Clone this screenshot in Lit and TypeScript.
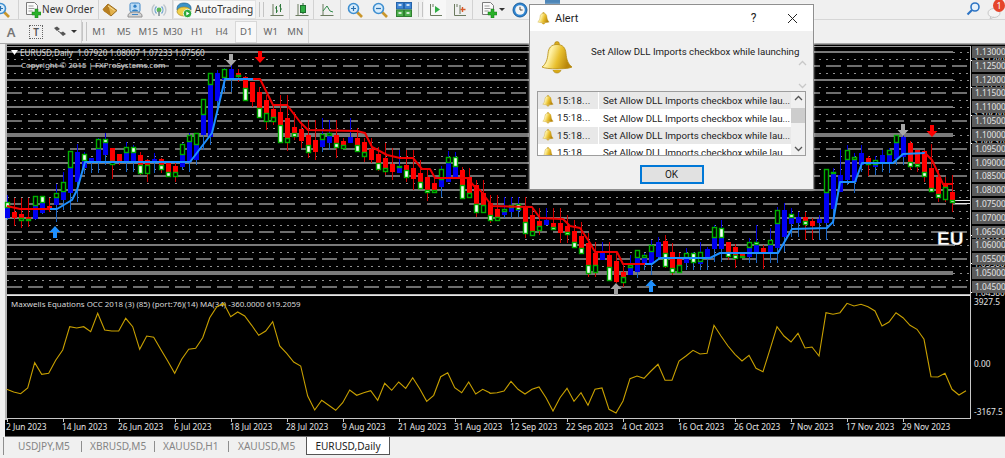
import { LitElement, html, css, svg } from "lit";
import { customElement } from "lit/decorators.js";

type C = [number, number, number, number, "R" | "B", number?, string?];
const CANDLES: C[] = [
[195,202,218,220,"B",208,"w"],[198,212,218,226,"R"],[198,214,221,228,"R",218,"g"],[198,217,221,227,"R",219,"g"],
[196,196,219,220,"B",206,"g"],[196,196,213,214,"B",203,"w"],[198,206,210,212,"R"],[184,193,205,222,"B",198,"g"],
[172,182,200,210,"B",192,"g"],[151,151,193,210,"B",168,"g"],[144,152,182,202,"B"],[152,154,168,174,"B",161,"w"],
[158,158,163,173,"B"],[138,139,162,173,"B",149,"g"],[133,139,155,165,"B",143,"w"],[148,148,165,179,"R",161,"g"],
[154,154,163,165,"R"],[142,147,162,172,"B",153,"g"],[145,147,162,172,"B",153,"w"],[152,155,174,175,"R",165,"w"],
[159,160,174,182,"R",165,"g"],[153,159,163,173,"B"],[158,159,170,173,"R",165,"w"],[162,163,177,177,"R",172,"w"],
[163,166,177,182,"R",172,"g"],[143,144,167,170,"B",155,"g"],[133,135,162,172,"B",142,"g"],[133,133,160,165,"B",145,"g"],
[99,99,135,150,"B",115,"g"],[73,73,137,145,"B",85,"g"],[70,73,101,110,"B"],[68,69,80,92,"B",78,"g"],
[62,69,78,92,"B"],[69,73,77,82,"R",75,"w"],[76,77,101,101,"R",88,"w"],[82,82,102,107,"R"],
[87,92,118,118,"R",108,"w"],[95,100,122,130,"R",113,"g"],[105,109,122,125,"R",117,"g"],[95,112,143,143,"R",125,"w"],
[95,118,143,151,"R",138,"g"],[112,127,137,140,"R",133,"w"],[122,129,141,148,"R"],[120,135,153,158,"R",145,"w"],
[120,140,152,160,"R"],[118,134,147,152,"B",140,"g"],[120,133,143,150,"B",136,"g"],[120,135,148,158,"R",143,"w"],
[138,141,149,149,"R",145,"g"],[118,137,143,143,"B"],[128,138,152,152,"R",145,"w"],[138,142,157,162,"R",152,"g"],
[138,149,160,163,"R"],[147,154,170,171,"R",163,"w"],[143,158,172,175,"R",168,"g"],[148,164,172,180,"R"],
[150,166,173,173,"B",168,"g"],[150,165,178,182,"R",170,"w"],[150,168,179,190,"R"],[160,173,189,189,"R",182,"w"],
[168,177,193,201,"R",190,"w"],[177,183,193,193,"R",190,"g"],[166,169,187,197,"B",180,"g"],[151,157,182,182,"B",163,"g"],
[152,157,179,179,"B",167,"w"],[167,170,199,199,"R",185,"w"],[168,177,198,198,"R",193,"g"],[180,185,213,217,"R",204,"w"],
[180,193,213,213,"R",205,"g"],[195,203,221,223,"R",215,"w"],[195,209,221,221,"R",217,"g"],[197,209,215,218,"B",212,"g"],
[197,205,212,218,"B",208,"g"],[197,204,211,217,"B",210,"w"],[197,207,234,238,"R",222,"w"],[208,215,236,236,"R",231,"g"],
[208,221,231,235,"R",226,"g"],[208,220,225,225,"B"],[208,223,230,230,"R",227,"w"],[208,223,233,243,"R"],
[215,226,235,243,"R",232,"w"],[220,231,248,248,"R",242,"w"],[222,236,254,254,"R",248,"w"],[233,243,274,277,"R",265,"w"],
[242,253,273,277,"R",265,"g"],[242,253,260,260,"B"],[242,255,281,281,"R",267,"w"],[252,261,282,283,"R"],
[263,272,283,287,"R",277,"g"],[255,265,275,275,"B",268,"g"],[250,250,272,278,"B",258,"g"],[253,255,263,270,"B",258,"g"],
[240,245,263,275,"B",252,"g"],[237,242,257,260,"B"],[235,241,267,268,"R",253,"w"],[243,252,273,275,"R",268,"w"],
[253,259,273,273,"R",265,"g"],[248,253,263,270,"B",258,"g"],[252,253,263,270,"B",263,"w"],[242,252,264,270,"B",262,"g"],
[247,249,258,270,"B"],[225,227,249,262,"B",238,"g"],[220,228,249,262,"B",238,"w"],[242,242,257,260,"R",252,"w"],
[244,247,259,268,"R",255,"w"],[252,252,258,258,"R",256,"g"],[238,242,257,263,"B",248,"g"],[225,242,253,263,"B",245,"w"],
[245,248,253,269,"R"],[228,240,253,263,"B",245,"g"],[207,210,248,263,"B",224,"g"],[203,210,237,252,"B"],
[208,214,224,237,"B",218,"w"],[212,217,223,237,"B"],[212,217,225,240,"R",221,"w"],[218,221,226,240,"R"],
[215,219,223,240,"B"],[169,169,223,240,"B",193,"g"],[168,172,209,226,"B",174,"w"],[150,175,192,192,"B"],
[145,150,180,185,"B",160,"g"],[153,157,182,193,"B",160,"g"],[145,153,165,172,"B"],[156,158,165,176,"R",163,"w"],
[156,160,167,175,"B",165,"g"],[150,155,163,172,"B"],[148,150,163,173,"B",155,"g"],[135,135,159,165,"B",143,"g"],
[134,137,157,165,"B"],[141,143,167,170,"R",162,"w"],[150,150,167,172,"R",164,"w"],[150,151,177,182,"R",172,"w"],
[144,168,192,192,"R",188,"w"],[170,177,198,202,"R",194,"w"],[177,185,200,202,"R",187,"g"],[175,192,203,212,"R",200,"w"],
];

const BLUE_MA = [
"50,209 57,209 72,200 77,190 85,162 190,162 212,133 225,79 253,79",
"645,264 652,264 660,258 710,258 720,253 778,253 792,229 827,228 833,222 840,182 855,182 862,163 893,163 903,154 925,153",
];
const RED_MA = [
"7,206 20,209 50,209",
"253,79 260,79 273,105 287,105 300,122 308,130 357,131 365,133 372,147 387,155 400,158 413,158 422,169 430,169 435,178 467,178 475,187 480,190 492,206 532,207 540,218 563,219 570,226 580,228 590,243 595,252 617,252 623,264 645,264",
"925,153 932,160 943,184 953,184",
];

const OSC_L = [280,288,293,276,200,235,232,193,162,92,96,92,107,52,102,105,105,67,92,160,120,124,160,195,232,190,160,157,125,65,33,22,62,48,60,88,118,105,77,150,172,198,210,300,342,313,328,343,320,282,298,290,284,313,262,283,258,277,245,278,316,298,242,230,275,290,258,294,280,290];
const OSC_R = [292,290,285,256,280,294,280,273,305,345,305,277,316,290,328,280,276,340,351,315,248,240,247,225,205,253,253,195,180,163,174,172,88,120,150,175,195,178,217,227,160,92,120,138,112,156,153,180,50,55,50,22,30,25,32,45,90,78,50,65,88,100,130,242,243,232,280,297,284];
const oscPoints = [
  ...OSC_L.map((v, i) => `${(6.67 + i * 7).toFixed(1)},${(296 + v / 3).toFixed(1)}`),
  ...OSC_R.map((v, i) => `${(490 + i * 7).toFixed(1)},${(296 + v / 3).toFixed(1)}`),
].join(" ");

const DATES = ["2 Jun 2023","14 Jun 2023","26 Jun 2023","6 Jul 2023","18 Jul 2023","28 Jul 2023","9 Aug 2023","21 Aug 2023","31 Aug 2023","12 Sep 2023","22 Sep 2023","4 Oct 2023","16 Oct 2023","26 Oct 2023","7 Nov 2023","17 Nov 2023","29 Nov 2023"];
const lvl = (k: number) => Math.round(52 + k * 6.91);
const LEVELS = Array.from({ length: 36 }, (_, k) => k);
const PRICES = Array.from({ length: 18 }, (_, i) => (1.13 - i * 0.005).toFixed(5));
const HIDDEN: [number, string][] = [[61,"1.12780"],[88,"1.11650"],[116,"1.10600"],[144,"1.09610"],[236,"1.06190"],[264,"1.05380"],[293,"1.04380"]];

const candle = (c: C, i: number) => {
  const x = 7 + i * 7;
  const [h, t, b, l, ty, s, m] = c;
  const cx = x + 0.5;
  const main = ty === "R" ? "#ff0000" : "#0000f0";
  const wick = ty === "R" ? "#d00000" : "#1a66c8";
  const split = s ?? 0;
  let extra = svg``;
  if (split) {
    const a = ty === "R" ? split : t;
    const z = ty === "R" ? b : split;
    extra = svg`<rect x=${x - 1.5} y=${a + 0.5} width="4" height=${Math.max(z - a - 1, 1)} fill=${m === "w" ? "#f4fff4" : "#000"} stroke="#00b000" stroke-width="1.4" shape-rendering="auto"></rect>`;
  }
  return svg`<line x1=${cx} x2=${cx} y1=${h} y2=${l} stroke=${wick}></line>
    ${ty === "B" ? svg`<line x1=${cx} x2=${cx} y1=${h} y2=${t} stroke="#0000e0"></line>` : ""}
    <rect x=${x - 2} y=${t} width="5" height=${b - t} fill=${main}></rect>${extra}`;
};

const arrow = (x: number, y: number, up: boolean, col: string) => {
  const d = up
    ? `M0 -6 L5.5 0 L2 0 L2 6 L-2 6 L-2 0 L-5.5 0 Z`
    : `M0 6 L5.5 0 L2 0 L2 -6 L-2 -6 L-2 0 L-5.5 0 Z`;
  return svg`<path d=${d} fill=${col} transform="translate(${x} ${y})"></path>`;
};

const ic = (w: number, h: number, body: unknown) =>
  html`<svg width=${w} height=${h} viewBox="0 0 ${w} ${h}">${body}</svg>`;

const mag = (sign: string) => ic(16, 16, svg`
  <line x1="10" y1="10" x2="15" y2="15" stroke="#c9962b" stroke-width="2.6"></line>
  <circle cx="6.5" cy="6.5" r="5" fill="#d7ecfb" stroke="#3f8fd0" stroke-width="1.6"></circle>
  ${sign === "+" ? svg`<path d="M4 6.5h5M6.5 4v5" stroke="#2a70b0" stroke-width="1.2"></path>` : svg`<path d="M4 6.5h5" stroke="#2a70b0" stroke-width="1.2"></path>`}`);
const plus = svg`<path d="M10 7h3v3h3v3h-3v3h-3v-3H7v-3h3z" fill="#28b028" stroke="#157a15" stroke-width=".5"></path>`;
const docPlus = ic(16, 16, svg`
  <path d="M1.5 .5h8l3 3v9h-11z" fill="#fafafa" stroke="#7b7b7b"></path>
  <path d="M3.5 4h5M3.5 6.5h6M3.5 9h4" stroke="#9a9a9a"></path>${plus}`);
const book = ic(16, 14, svg`
  <path d="M6 1 L15 7.5 L9 13 L1 6.5 Z" fill="#e2b04a" stroke="#96681c"></path>
  <path d="M6 1 L1 6.5 L2 8.5 L9 13" fill="#b77f22"></path>
  <path d="M6 3 L12.5 7.5" stroke="#f7dd96"></path>`);
const person = ic(16, 16, svg`
  <rect x="3" y="1" width="10" height="9" rx="1.5" fill="#bcdcf5" stroke="#3f86c6"></rect>
  <circle cx="8" cy="4.2" r="1.6" fill="#2f7fc4"></circle>
  <path d="M5 9c0-2 6-2 6 0" fill="#2f7fc4"></path>
  <path d="M1 14c0-3 3-4 7-4s7 1 7 4v1H1z" fill="#d3d3d3" stroke="#8f8f8f"></path>
  <path d="M5 12.5h6" stroke="#3f86c6"></path>`);
const signal = ic(16, 16, svg`
  <path d="M3.5 2.5a7.5 7.5 0 0 0 0 11" fill="none" stroke="#bfc7cc" stroke-width="1.4"></path>
  <path d="M12.5 2.5a7.5 7.5 0 0 1 0 11" fill="none" stroke="#bfc7cc" stroke-width="1.4"></path>
  <path d="M5.5 4.5a5 5 0 0 0 0 7" fill="none" stroke="#6ea5cf" stroke-width="1.3"></path>
  <path d="M10.5 4.5a5 5 0 0 1 0 7" fill="none" stroke="#6ea5cf" stroke-width="1.3"></path>
  <circle cx="8" cy="8" r="2.4" fill="#58b858"></circle><path d="M8 9v5" stroke="#7a8a90" stroke-width="1.5"></path>`);
const auto = ic(16, 16, svg`
  <path d="M1 7 C1 2 5 1 8 1 C12 1 15 3 15 6 L15 8 L1 8Z" fill="#3b93c9" stroke="#22628c" stroke-width=".7"></path>
  <ellipse cx="8" cy="9.5" rx="7" ry="4.5" fill="#f0d049" stroke="#a98a1e" stroke-width=".7"></ellipse>
  <circle cx="11.5" cy="11.5" r="4.2" fill="#2caa3c" stroke="#fff" stroke-width=".8"></circle>
  <path d="M10.3 9.5l3.2 2-3.2 2z" fill="#fff"></path>`);
const axes = `M1.5 1v11.5H14M4 1v3`;
const bars = ic(14, 14, svg`
  <path d="M.5 12.5h13M3 1v12" stroke="#6b7a5f" fill="none"></path>
  <path d="M6.5 3v7M5 5h1.5M6.5 8H8M10.5 1v8M9 3h1.5M10.5 6H12" stroke="#2f7a3c" fill="none"></path>`);
const candlesIc = ic(14, 14, svg`
  <path d="M.5 12.5h13M3 1v12" stroke="#6b7a5f" fill="none"></path>
  <path d="M8 0v11" stroke="#1f6e2e"></path><rect x="5.5" y="2.5" width="5" height="7" fill="#2fae44" stroke="#1f6e2e"></rect>`);
const lineIc = ic(14, 14, svg`
  <path d="M.5 12.5h13M3 1v12" stroke="#6b7a5f" fill="none"></path>
  <path d="M3 8l4-5 3 5 3 1" stroke="#2f8a4a" fill="none"></path>`);
const tiles = ic(16, 15, svg`
  <rect x=".5" y=".5" width="7" height="6.5" fill="#3f86d6" stroke="#2663a8"></rect>
  <rect x="8.5" y=".5" width="7" height="6.5" fill="#3f86d6" stroke="#2663a8"></rect>
  <rect x=".5" y="8" width="7" height="6.5" fill="#4cae4c" stroke="#2f7f2f"></rect>
  <rect x="8.5" y="8" width="7" height="6.5" fill="#4cae4c" stroke="#2f7f2f"></rect>
  <path d="M2.5 3h3M10.5 3h3M2.5 11h3M10.5 11h3" stroke="#fff" stroke-width="1.5"></path>`);
const playIc = ic(13, 14, svg`
  <path d=${axes} stroke="#6b7a5f" fill="none"></path><path d="M6 3l5 3.5-5 3.5z" fill="#2fae44"></path>`);
const shiftIc = ic(13, 14, svg`
  <path d=${axes} stroke="#6b7a5f" fill="none"></path><path d="M7 2v9" stroke="#6b7a5f"></path>
  <path d="M9.5 4v5M7.5 6.5h5" stroke="#d85a2a" stroke-width="1.4"></path>`);
const clock = ic(16, 16, svg`
  <circle cx="8" cy="8" r="7" fill="#2f86d2" stroke="#1d5f9e"></circle>
  <circle cx="8" cy="8" r="4.8" fill="#f5f5f5"></circle>
  <path d="M8 4.8V8h2.6" fill="none" stroke="#444"></path>`);
const grip = html`<span class="grip"></span>`;
const sep = html`<span class="sep"></span>`;
const caret = html`<span class="caret"></span>`;

const bell = (w: number, id: string) => html`<svg width=${w} height=${w} viewBox="0 0 34 34" class="bell">
  ${svg`<defs><linearGradient id=${id} x1="0" x2="1" y1="0" y2=".3">
    <stop offset="0" stop-color="#f3d75a"></stop><stop offset=".35" stop-color="#fff2a6"></stop>
    <stop offset=".65" stop-color="#e9c02e"></stop><stop offset="1" stop-color="#b8860b"></stop></linearGradient></defs>
  <circle cx="17" cy="3" r="2.4" fill="#d9ab1c" stroke="#a57c0c" stroke-width=".6"></circle>
  <path d="M17 3.5c-6 0-8.5 3.5-9 9-.5 6-2 10.5-6 13.5 4 2.5 26 2.5 30 0-4-3-5.500-7.500-6-13.500-.5-5.500-3-9-9-9z" fill="url(#${id})" stroke="#b48a10" stroke-width=".8"></path>
  <path d="M13 29c1 4 7 4 8 0" fill="#d8aa18" stroke="#a57c0c" stroke-width=".6"></path>`}</svg>`;

const ROW1: [number, unknown, string?][] = [
  [10, html`<span class="cutmag">${mag("+")}</span>`], [8, ""], [1, sep], [6, ""], [16, docPlus],
  [57, html`<span class="tt neworder">New Order</span>`], [1, sep], [21, book], [29, person], [19, signal], [4, ""], [1, sep],
  [83, html`${auto}<span class="tt autot">AutoTrading</span>`, "pressed"], [3, ""], [5, grip], [25, bars], [1, sep], [23, candlesIc], [1, sep], [26, lineIc], [1, sep],
  [27, mag("+")], [23, mag("-")], [25, tiles], [8, grip], [22, playIc, "hot"], [26, shiftIc], [1, sep], [6, ""], [19, docPlus], [7, caret], [30, clock], [10, ""],
  [15, html`<span class="peek"></span>`, "top"],
];
const PERIODS = ["M1","M5","M15","M30","H1","H4","D1","W1","MN"];
const TABS = ["USDJPY,M5","XBRUSD,M5","XAUUSD,H1","XAUUSD,M5"];
const ROWS = [0, 1, 2, 3];

@customElement("app-root")
export class AppRoot extends LitElement {
  static styles = css`
    :host { display: block; width: 1005px; height: 458px; position: relative; overflow: hidden; background: #f0f0f0;
      font-family: "Noto Sans", "Liberation Sans", sans-serif; color: #303030; }
    .row1 { height: 19px; display: flex; border-bottom: 1px solid #d6d6d6; }
    .row2 { height: 23px; display: flex; border-bottom: 1px solid #a9a9a9; }
    .cell { display: flex; align-items: center; justify-content: center; flex: none; height: 100%; }
    .cell.pressed { background: #f8f8f8; box-shadow: inset 0 0 0 1px #e2e2e2; gap: 3px; }
    .cell.hot { background: #f7f7f7; }
    .cell.top { align-items: flex-start; }
    .peek { display: block; width: 15px; height: 4px; background: #4d86b8; }
    .cutmag { display: flex; justify-content: flex-end; width: 10px; overflow: hidden; }
    .cutmag svg { flex: none; }
    .sep { display: block; width: 1px; height: 100%; background: #d2d2d2; }
    .grip { display: block; width: 3px; height: 80%; border-left: 1px solid #c4c4c4; border-right: 1px solid #c4c4c4; }
    .caret { display: block; border-top: 3px solid #333; border-left: 3px solid transparent; border-right: 3px solid transparent; }
    .tt { font-size: 10.1px; line-height: 1; white-space: nowrap; color: #333; }
    .neworder { width: 100%; padding-left: 1px; }
    .right { margin-left: auto; display: flex; align-items: flex-start; gap: 7px; height: 100%; padding-top: 2px; box-sizing: border-box; }
    .msg { position: relative; width: 18px; height: 16px; }
    .badge { position: absolute; left: 6px; top: -3px; width: 12px; height: 13px; border-radius: 50%; background: #e5452b; color: #fff;
      font-size: 9px; line-height: 13px; text-align: center; }
    .a { font-size: 13px; font-weight: 600; color: #777; }
    .t { width: 12px; height: 12px; border: 1px dotted #666; font-size: 10px; line-height: 12px; text-align: center; color: #555; font-weight: 600; }
    .p { font-size: 9.5px; color: #666; }
    .p.sel { width: 22px; height: 22px; display: flex; align-items: center; justify-content: center; background: #f8f8f8; border: 1px solid #d8d8d8; box-sizing: border-box; }
    svg.chart { display: block; background: #000; }
    svg.chart text { font-family: "Noto Sans", "Liberation Sans", sans-serif; font-size: 8.3px; fill: #e4e4e4; }
    svg.chart text.legend { fill: #d8d8d8; font-size: 8.2px; }
    svg.chart text.small { fill: #d8d8d8; font-size: 7.95px; }
    svg.chart text.eu { font-family: "Liberation Sans", sans-serif; font-size: 19px; font-weight: 700; fill: #fff; }
    .tabs { height: 21px; display: flex; align-items: stretch; padding-left: 3px; background: #f0f0f0; font-size: 10.1px; }
    .tabs::before { content: ""; width: 1px; height: 18px; background: #8e8e8e; margin-right: 2px; }
    .tab { color: #858585; display: flex; align-items: center; height: 18px; padding-left: 8px; position: relative; box-sizing: border-box; white-space: nowrap; }
    .tab::after { content: ""; position: absolute; right: 0; top: 4px; height: 11px; width: 1px; background: #8e8e8e; }
    .tab.t0 { width: 76px; padding-left: 12px; }
    .tab.t1 { width: 73px; }
    .tab.t2 { width: 74px; }
    .tab.t3 { width: 77px; padding-left: 9px; }
    .tab.t3::after { display: none; }
    .tab.on { color: #222; background: #fff; border: 1px solid #555; border-top: none; padding: 0; width: 84px; justify-content: center; }
    .tab.on::after { display: none; }
    .dlg { position: absolute; left: 529px; top: 4px; width: 285px; height: 186px; box-sizing: border-box; background: #f0f0f0;
      border: 1px solid #8f8f8f; box-shadow: 0 0 2px rgba(255,255,255,.6); display: flex; flex-direction: column;
      font-family: Roboto, "Liberation Sans", sans-serif; }
    .title { height: 26px; background: #fff; display: flex; align-items: center; padding-left: 7px; font-size: 11px; color: #222; flex: none; }
    .title .name { margin-left: 5px; }
    .title .q { margin-left: auto; width: 39px; text-align: center; font-size: 12px; }
    .title .x { width: 39px; display: flex; justify-content: center; margin-right: 1px; }
    .body { flex: 1; display: flex; flex-direction: column; padding: 0 7px; }
    .top-msg { height: 60px; display: flex; position: relative; flex: none; }
    .top-msg .bell { margin: 10px 0 0 3px; flex: none; }
    .msgtext { margin: 15px 0 0 17px; font-size: 9.7px; white-space: nowrap; color: #222; }
    .chev { position: absolute; left: 261px; }
    .chev.c1 { top: 20px; }
    .chev.c2 { top: 43px; }
    .list { height: 65px; border: 1px solid #9d9d9d; background: #fff; display: flex; box-sizing: border-box; width: 269px; flex: none; }
    .lrows { flex: 1; overflow: hidden; min-width: 0; }
    .lr { height: 17.4px; display: flex; align-items: center; font-size: 9.7px; color: #222; white-space: nowrap; overflow: hidden; }
    .lr.odd { background: #e8e8e8; }
    .lr .i { width: 19px; display: flex; justify-content: center; flex: none; }
    .lr .tm { width: 42px; flex: none; border-right: 1px solid #fff; box-sizing: border-box; line-height: 17.400px; letter-spacing: .2px; }
    .lr .m { padding-left: 4px; }
    .sb { width: 14px; flex: none; background: #f0f0f0; display: flex; flex-direction: column; align-items: center; justify-content: space-between; padding: 3px 0; box-sizing: border-box; position: relative; }
    .thumb { position: absolute; top: 16px; left: 0; width: 14px; height: 15px; background: #cdcdcd; }
    .okrow { display: flex; justify-content: center; margin-top: 9px; }
    .ok { width: 64px; height: 19px; border: 2px solid #0078d7; background: #e1e1e1; box-sizing: border-box; font-size: 10px; display: flex; align-items: center; justify-content: center; color: #222; }
  `;

  render() {
    const chev = (up: boolean, c: string) => html`<svg width="9" height="6" viewBox="0 0 9 6"><path d=${up ? "M1 5l3.500-3.500L8 5" : "M1 1l3.500 3.500L8 1"} fill="none" stroke=${c} stroke-width="1.3"></path></svg>`;
    return html`
      <div class="row1">
        ${ROW1.map(([w, c, k]) => html`<div class="cell ${k ?? ""}" style="width:${w}px">${c}</div>`)}
        <div class="right">
          ${ic(14, 14, svg`<circle cx="9" cy="5" r="4" fill="#e6f1fb" stroke="#2d74c4" stroke-width="1.6"></circle><line x1="6" y1="8" x2="1.500" y2="12.500" stroke="#2d74c4" stroke-width="2.2"></line>`)}
          <div class="msg">${ic(18, 16, svg`<ellipse cx="7" cy="10" rx="6" ry="4.500" fill="#f4f4f4" stroke="#c8c8c8"></ellipse><path d="M4 13l-1 3 4-2" fill="#e8e8e8" stroke="#c8c8c8"></path>`)}<span class="badge">1</span></div>
        </div>
      </div>
      <div class="row2">
        <div class="cell" style="width:22px"><span class="a">A</span></div>
        <div class="cell" style="width:28px"><span class="t">T</span></div>
        <div class="cell" style="width:20px">${ic(15, 12, svg`<path d="M1 2l3-1.500 3 2.500-3 2zM7 7l3-1.500 3 2.500-3 2z" fill="#555"></path><path d="M5 5l3 2" stroke="#555"></path>`)}</div>
        <div class="cell" style="width:7px">${caret}</div>
        <div class="cell" style="width:4px"></div>
        <div class="cell" style="width:1px">${sep}</div>
        <div class="cell" style="width:5px">${grip}</div>
        ${PERIODS.map((p) => html`<div class="cell" style="width:24.500px"><span class="p ${p === "D1" ? "sel" : ""}">${p}</span></div>`)}
        <div class="cell" style="width:1px">${sep}</div>
      </div>
      <svg class="chart" width="1005" height="393" viewBox="0 44 1005 393" shape-rendering="crispEdges">
        <rect x="0" y="44" width="1005" height="393" fill="#000"></rect>
        <rect x="0" y="44" width="5" height="393" fill="#f0f0f0"></rect>
        <rect x="5" y="44" width="1000" height="1" fill="#6e6e6e"></rect>
        <rect x="5" y="44" width="2" height="376" fill="#b5b5b5"></rect>
        <rect x="7" y="46" width="964" height="1" fill="#9a9a9a"></rect>
        ${LEVELS.map((k) => {
          const y = lvl(k);
          const m = k % 4;
          if (m === 0) {
            const thick = k === 12 || k === 32;
            return svg`<line x1="7" x2="953" y1=${y} y2=${y} stroke="#7a7a7a" stroke-width=${thick ? 4 : 2}></line>
              <line x1="953" x2="969" y1=${y} y2=${y} stroke="#8a8a8a" stroke-dasharray="2 5"></line>`;
          }
          if (m === 2) return svg`<line x1="7" x2="969" y1=${y} y2=${y} stroke="#6e6e6e" stroke-width="2" stroke-dasharray="15 6"></line>`;
          return svg`<line x1="7" x2="969" y1=${y} y2=${y} stroke="#909090" stroke-dasharray="2 5"></line>`;
        })}
        <rect x="7" y="294" width="964" height="1" fill="#b8b8b8"></rect>
        <rect x="7" y="295" width="964" height="1" fill="#e8e8e8"></rect>
        <rect x="955" y="200" width="16" height="1" fill="#e8e8e8"></rect>
        <rect x="955" y="203" width="16" height="1" fill="#e8e8e8"></rect>
        ${CANDLES.map(candle)}
        <g shape-rendering="auto" fill="none" stroke-width="2" stroke-linejoin="round">
          ${BLUE_MA.map((p) => svg`<polyline points=${p} stroke="#1e90ff"></polyline>`)}
          ${RED_MA.map((p) => svg`<polyline points=${p} stroke="#f00000"></polyline>`)}
        </g>
        <g shape-rendering="auto">
          ${arrow(231, 60, false, "#a8a8a8")}${arrow(260, 57, false, "#ff0000")}${arrow(55, 232, true, "#1e90ff")}
          ${arrow(616, 289, true, "#a0a0a0")}${arrow(651, 286, true, "#1e90ff")}${arrow(903, 130, false, "#a8a8a8")}${arrow(932, 131, false, "#ff0000")}
          <path d="M11 50h7l-3.500 5z" fill="#fff"></path>
          <text class="legend" x="20" y="56" xml:space="preserve">EURUSD,Daily  1.07920 1.08007 1.07233 1.07560</text>
          <text class="small" x="21" y="68">Copyright © 2015 | FXProSystems.com</text>
          <text class="eu" x="937" y="244.500" stroke="#777" stroke-width=".3">EU</text>
          <text class="small" x="11" y="307">Maxwells Equations OCC 2018 (3) (85) (port:76)(14) MA(34) -360.0000 619.2059</text>
          <polyline points=${oscPoints} fill="none" stroke="#c8a000" stroke-width="1.100"></polyline>
          ${HIDDEN.map(([y, t]) => svg`<rect x="971" y=${y - 1} width="3" height="1" fill="#fff"></rect><text x="974" y=${y + 3}>${t}</text>`)}
          ${PRICES.map((p, i) => {
            const y = lvl(i * 2);
            return svg`<rect x="972" y=${y - 6} width="33" height="12" fill="#5b5b5b" shape-rendering="crispEdges"></rect><text x="975" y=${y + 3}>${p}</text>`;
          })}
          <text x="974" y="305">3927.5</text><text x="974" y="367">0.00</text><text x="974" y="415">-3167.5</text>
          ${DATES.map((d, i) => svg`<text x=${6 + i * 56} y="430">${d}</text>`)}
        </g>
        <rect x="970" y="46" width="1" height="373" fill="#c8c8c8"></rect>
        <rect x="5" y="418" width="966" height="1" fill="#c8c8c8"></rect>
        ${DATES.map((_, i) => svg`<rect x=${7 + i * 56} y="419" width="1" height="3" fill="#c8c8c8"></rect>`)}
        <rect x="5" y="436" width="1000" height="1" fill="#6e6e6e"></rect>
      </svg>
      <div class="tabs">
        ${TABS.map((t, i) => html`<div class="tab t${i}">${t}</div>`)}
        <div class="tab on">EURUSD,Daily</div>
      </div>
      <div class="dlg">
        <div class="title">
          ${bell(13, "bg1")}<span class="name">Alert</span>
          <span class="q">?</span>
          <span class="x">${ic(11, 11, svg`<path d="M1 1l9 9M10 1l-9 9" stroke="#222" stroke-width="1"></path>`)}</span>
        </div>
        <div class="body">
          <div class="top-msg">
            ${bell(34, "bg2")}
            <span class="msgtext">Set Allow DLL Imports checkbox while launching</span>
            <span class="chev c1">${chev(true, "#c8c8c8")}</span>
            <span class="chev c2">${chev(false, "#c8c8c8")}</span>
          </div>
          <div class="list">
            <div class="lrows">
              ${ROWS.map((r) => html`<div class="lr ${r % 2 === 0 ? "odd" : ""}">
                <span class="i">${bell(12, "bl" + r)}</span><span class="tm">${r === 3 ? "15:18" : "15:18..."}</span>
                <span class="m">${r === 3 ? "Set Allow DLL Imports checkbox while lau" : "Set Allow DLL Imports checkbox while lau..."}</span></div>`)}
            </div>
            <div class="sb">${chev(true, "#555")}<span class="thumb"></span>${chev(false, "#555")}</div>
          </div>
          <div class="okrow"><div class="ok">OK</div></div>
        </div>
      </div>
    `;
  }
}
